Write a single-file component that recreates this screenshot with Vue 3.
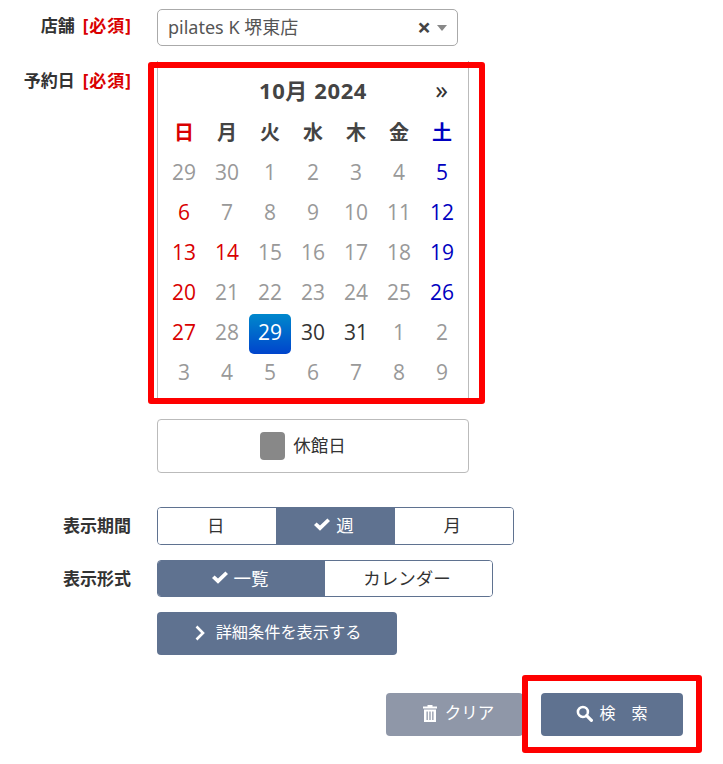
<template>
  <div class="search-form">
    <div class="form-row shop-row">
      <div class="form-label">店舗<span class="required">[必須]</span></div>
      <div class="shop-select">
        <span class="shop-name">pilates K 堺東店</span>
        <span class="shop-clear">×</span>
        <span class="shop-arrow"></span>
      </div>
    </div>

    <div class="form-row date-row">
      <div class="form-label">予約日<span class="required">[必須]</span></div>
      <div class="date-col">
        <div class="calendar">
          <div class="cal-head">
            <span class="cal-title">10月 2024</span>
            <span class="cal-next">»</span>
          </div>
          <div class="cal-grid">
            <div
              v-for="(w, i) in weekdays"
              :key="w"
              class="cal-week"
              :class="{ sun: i === 0, sat: i === 6 }"
            >{{ w }}</div>
            <div
              v-for="d in days"
              :key="d.key"
              class="cal-day"
              :class="d.cls"
            >{{ d.label }}</div>
          </div>
        </div>
        <div class="legend">
          <span class="legend-mark"></span>
          <span class="legend-text">休館日</span>
        </div>
      </div>
    </div>

    <div class="form-row period-row">
      <div class="form-label">表示期間</div>
      <div class="toggle toggle-period">
        <div class="toggle-item">日</div>
        <div class="toggle-item active">
          <svg class="check" viewBox="0 0 16 13"><path d="M0 7l2.600-2.600L6 7.600 13.400 .4 16 3 6 12.800z" fill="#fff" /></svg>
          週
        </div>
        <div class="toggle-item">月</div>
      </div>
    </div>

    <div class="form-row format-row">
      <div class="form-label">表示形式</div>
      <div class="toggle toggle-format">
        <div class="toggle-item active">
          <svg class="check" viewBox="0 0 16 13"><path d="M0 7l2.600-2.600L6 7.600 13.400 .4 16 3 6 12.800z" fill="#fff" /></svg>
          一覧
        </div>
        <div class="toggle-item">カレンダー</div>
      </div>
    </div>

    <div class="form-row detail-row">
      <div class="form-label"></div>
      <button class="btn btn-detail">
        <svg class="chevron" viewBox="0 0 10 16"><path d="M1.500 1.500L8 8l-6.500 6.500" fill="none" stroke="#fff" stroke-width="2.600" /></svg>
        詳細条件を表示する
      </button>
    </div>

    <div class="actions">
      <button class="btn btn-clear">
        <svg class="trash" viewBox="0 0 16 18"><path d="M5.500 2.500V1h5v1.500H15v2H1v-2zM2 5.500h12V18H2zM4.500 7.500v8.500h1.300V7.500zM7.350 7.500v8.500h1.300V7.500zM10.200 7.500v8.500h1.300V7.500z" fill="#fff" fill-rule="evenodd" /></svg>
        クリア
      </button>
      <button class="btn btn-search">
        <svg class="glass" viewBox="0 0 16 16"><circle cx="6.500" cy="6.500" r="4.700" fill="none" stroke="#fff" stroke-width="2.400" /><path d="M10 10l4.500 4.500" stroke="#fff" stroke-width="3" stroke-linecap="round" /></svg>
        検　索
      </button>
    </div>

    <div class="mark mark-calendar"></div>
    <div class="mark mark-search"></div>
  </div>
</template>

<script setup>
const weekdays = ['日', '月', '火', '水', '木', '金', '土']

// 表示する6週分の日付（種類ごとに色を変える）
const rows = [
  [[29], [30], [1], [2], [3], [4], [5, 'sat']],
  [[6, 'sun'], [7], [8], [9], [10], [11], [12, 'sat']],
  [[13, 'sun'], [14, 'sun'], [15], [16], [17], [18], [19, 'sat']],
  [[20, 'sun'], [21], [22], [23], [24], [25], [26, 'sat']],
  [[27, 'sun'], [28], [29, 'selected'], [30, 'open'], [31, 'open'], [1], [2]],
  [[3], [4], [5], [6], [7], [8], [9]]
]

const days = rows.flat().map((d, i) => ({
  key: i,
  label: d[0],
  cls: d[1] || ''
}))
</script>

<style scoped>
.search-form {
  position: relative;
  width: 723px;
  height: 764px;
  box-sizing: border-box;
  padding-top: 9px;
  overflow: hidden;
  background: #fff;
  color: #333;
  font-family: "Noto Sans", "Noto Sans CJK JP", sans-serif;
  font-size: 16px;
}

.form-row {
  display: flex;
  align-items: flex-start;
}

.form-label {
  width: 131px;
  margin-right: 26px;
  flex-shrink: 0;
  text-align: right;
  font-size: 17px;
  font-weight: 700;
  color: #333;
  line-height: 38px;
  white-space: nowrap;
}

.shop-row .form-label {
  line-height: 34px;
}

.required {
  color: #d90000;
  margin-left: 8px;
  letter-spacing: 1px;
  margin-right: -1px;
}

.shop-select {
  width: 301px;
  height: 37px;
  box-sizing: border-box;
  border: 1px solid #aaa;
  border-radius: 5px;
  display: flex;
  align-items: center;
  padding: 0 10px;
  color: #555;
}

.shop-name {
  flex: 1;
  font-size: 18px;
  padding-bottom: 4px;
}

.shop-clear {
  font-size: 24px;
  font-weight: 700;
  color: #444;
  line-height: 1;
  margin-right: 6px;
  padding-bottom: 2px;
}

.shop-arrow {
  width: 0;
  height: 0;
  border-left: 5px solid transparent;
  border-right: 5px solid transparent;
  border-top: 6px solid #888;
}

.date-row {
  margin-top: 15px;
}

.date-row .form-label {
  line-height: 20px;
  padding-top: 10px;
}

.calendar {
  width: 312px;
  height: 343px;
  box-sizing: border-box;
  border: 1px solid #bbb;
  border-top: none;
  border-radius: 0 0 4px 4px;
}

.cal-head {
  display: flex;
  align-items: center;
  justify-content: center;
  position: relative;
  height: 53px;
  padding-top: 2px;
  box-sizing: border-box;
}

.cal-title {
  font-size: 22px;
  font-weight: 700;
  color: #444;
  letter-spacing: 0.6px;
}

.cal-next {
  position: absolute;
  right: 20px;
  top: 10px;
  font-size: 25px;
  font-weight: 400;
  color: #333;
  line-height: 36px;
}

.cal-grid {
  display: grid;
  grid-template-columns: repeat(7, 43px);
  grid-auto-rows: 40px;
  padding-left: 5px;
}

.cal-week,
.cal-day {
  display: flex;
  align-items: center;
  justify-content: center;
  box-sizing: border-box;
  padding: 0 1px 5px 0;
}

.cal-week {
  font-size: 20px;
  font-weight: 700;
  color: #444;
}

.cal-week.sun,
.cal-day.sun {
  color: #d90000;
}

.cal-week.sat,
.cal-day.sat {
  color: #0000c0;
}

.cal-day {
  font-size: 21px;
  font-family: "Open Sans", "Noto Sans CJK JP", sans-serif;
  color: #999;
}

.cal-day.open {
  color: #333;
}

.cal-day.selected {
  color: #fff;
  border-radius: 5px;
  margin: 0 1px 0 0;
  padding-right: 0;
  background: linear-gradient(#0088cc, #0044cc);
}

.legend {
  width: 312px;
  height: 54px;
  box-sizing: border-box;
  margin-top: 15px;
  padding-right: 20px;
  border: 1px solid #bbb;
  border-radius: 4px;
  display: flex;
  align-items: center;
  justify-content: center;
  gap: 8px;
  font-size: 17.500px;
  color: #333;
}

.legend-text {
  padding-bottom: 4px;
}

.legend-mark {
  width: 25px;
  height: 28px;
  border-radius: 4px;
  background: #888;
}

.period-row {
  margin-top: 34px;
}

.format-row {
  margin-top: 15px;
}

.detail-row {
  margin-top: 14px;
}

.toggle {
  display: flex;
  box-sizing: border-box;
  border: 1px solid #5f7290;
  border-radius: 4px;
  overflow: hidden;
  font-size: 17.500px;
  color: #333;
}

.toggle-period {
  width: 357px;
  height: 38px;
}

.toggle-format {
  width: 336px;
  height: 37px;
}

.toggle-item {
  display: flex;
  align-items: center;
  justify-content: center;
  gap: 6px;
  box-sizing: border-box;
  padding: 0 3px 3px 0;
  background: #fff;
}

.toggle-period .toggle-item {
  flex: 1;
}

.toggle-format .toggle-item:first-child {
  width: 167px;
}

.toggle-format .toggle-item:last-child {
  flex: 1;
}

.toggle-item.active {
  background: #5f7290;
  color: #fff;
}

.check {
  width: 16px;
  height: 13px;
}

.btn {
  display: flex;
  align-items: center;
  justify-content: center;
  box-sizing: border-box;
  border: none;
  border-radius: 4px;
  height: 43px;
  color: #fff;
  font-family: inherit;
  font-size: 16px;
  padding: 0 0 5px;
}

.btn-detail {
  width: 240px;
  gap: 11px;
  background: #5f7290;
  font-size: 16.200px;
  padding-left: 2px;
}

.chevron {
  width: 10px;
  height: 16px;
  margin-top: 3px;
}

.actions {
  display: flex;
  margin-top: 38px;
  margin-left: 386px;
  gap: 18px;
}

.btn-clear {
  width: 137px;
  gap: 7px;
  background: #8f97a8;
  font-size: 16.500px;
  padding-left: 7px;
}

.btn-search {
  width: 142px;
  gap: 6px;
  background: #5f7290;
  font-size: 16px;
}

.trash {
  width: 16px;
  height: 18px;
  margin-top: 2px;
}

.glass {
  width: 17px;
  height: 17px;
  margin-top: 3px;
}

.mark {
  position: absolute;
  box-sizing: border-box;
  border: 6px solid #fe0000;
  border-radius: 3px;
}

.mark-calendar {
  left: 148px;
  top: 62px;
  width: 337px;
  height: 342px;
}

.mark-search {
  left: 522px;
  top: 675px;
  width: 180px;
  height: 78px;
}
</style>

<style>
html,
body {
  margin: 0;
  background: #fff;
}
</style>
